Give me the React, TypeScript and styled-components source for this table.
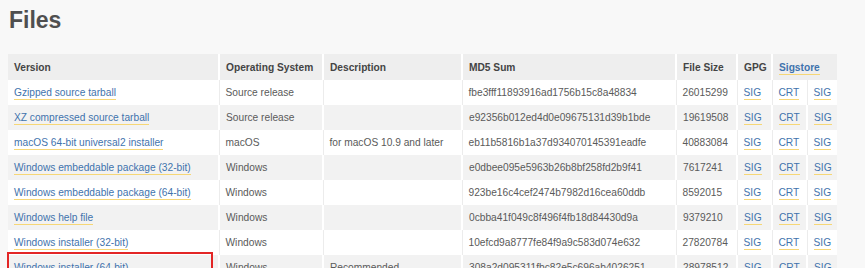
import React from 'react';
import styled, { createGlobalStyle } from 'styled-components';

const GlobalStyle = createGlobalStyle`
  html, body {
    margin: 0;
    padding: 0;
    background: #f8f8f8;
  }
  body {
    font-family: "Liberation Sans", Arial, sans-serif;
    color: #555;
  }
`;

const Page = styled.div`
  padding: 0 0 0 8px;
  width: 857px;
  height: 268px;
  overflow: hidden;
`;

const Heading = styled.h1`
  margin: 0;
  padding: 7px 0 0 1px;
  height: 54px;
  box-sizing: border-box;
  font-size: 23px;
  line-height: 27px;
  font-weight: 700;
  color: #4f4f4f;
`;

const Table = styled.table`
  table-layout: fixed;
  width: 829px;
  border-collapse: collapse;
  font-size: 10.2px;
`;

const HeadCell = styled.th<{ $first?: boolean }>`
  height: 26px;
  padding: 0 6px;
  background: #eeeeee;
  text-align: left;
  font-weight: 700;
  color: #444;
  border-left: ${(p) => (p.$first ? 'none' : '2px solid #fff')};
  white-space: nowrap;
`;

const Row = styled.tr<{ $shade: boolean }>`
  background: ${(p) => (p.$shade ? '#f2f2f2' : '#ffffff')};
`;

const Cell = styled.td<{ $first?: boolean; $shade: boolean }>`
  position: relative;
  height: 25px;
  padding: 0 6px;
  color: #5a5a5a;
  white-space: nowrap;
  overflow: visible;
  border-left: ${(p) =>
    p.$first ? 'none' : p.$shade ? '2px solid #ffffff' : '1px solid #ececec'};
`;

const Link = styled.a`
  color: #3f73ad;
  text-decoration: none;
  border-bottom: 1px solid #f6d776;
  padding-bottom: 1px;
`;

const Highlight = styled.div`
  position: absolute;
  left: -1px;
  top: -3px;
  width: 206px;
  height: 30px;
  border: 2px solid #e32626;
  box-sizing: border-box;
  pointer-events: none;
`;

type FileRow = {
  name: string;
  os: string;
  desc: string;
  md5: string;
  size: string;
  mark?: boolean;
};

const files: FileRow[] = [
  { name: 'Gzipped source tarball', os: 'Source release', desc: '', md5: 'fbe3fff11893916ad1756b15c8a48834', size: '26015299' },
  { name: 'XZ compressed source tarball', os: 'Source release', desc: '', md5: 'e92356b012ed4d0e09675131d39b1bde', size: '19619508' },
  { name: 'macOS 64-bit universal2 installer', os: 'macOS', desc: 'for macOS 10.9 and later', md5: 'eb11b5816b1a37d934070145391eadfe', size: '40883084' },
  { name: 'Windows embeddable package (32-bit)', os: 'Windows', desc: '', md5: 'e0dbee095e5963b26b8bf258fd2b9f41', size: '7617241' },
  { name: 'Windows embeddable package (64-bit)', os: 'Windows', desc: '', md5: '923be16c4cef2474b7982d16cea60ddb', size: '8592015' },
  { name: 'Windows help file', os: 'Windows', desc: '', md5: '0cbba41f049c8f496f4fb18d84430d9a', size: '9379210' },
  { name: 'Windows installer (32-bit)', os: 'Windows', desc: '', md5: '10efcd9a8777fe84f9a9c583d074e632', size: '27820784' },
  { name: 'Windows installer (64-bit)', os: 'Windows', desc: 'Recommended', md5: '308a2d095311fbc82e5c696ab4026251', size: '28978512', mark: true },
];

const widths = [211, 104, 139, 214, 61, 35, 35, 30];

export default function App() {
  return (
    <Page>
      <GlobalStyle />
      <Heading>Files</Heading>
      <Table>
        <colgroup>
          {widths.map((w, i) => (
            <col key={i} style={{ width: w }} />
          ))}
        </colgroup>
        <thead>
          <tr>
            <HeadCell $first>Version</HeadCell>
            <HeadCell>Operating System</HeadCell>
            <HeadCell>Description</HeadCell>
            <HeadCell>MD5 Sum</HeadCell>
            <HeadCell>File Size</HeadCell>
            <HeadCell>GPG</HeadCell>
            <HeadCell colSpan={2}>
              <Link href="#">Sigstore</Link>
            </HeadCell>
          </tr>
        </thead>
        <tbody>
          {files.map((f, i) => {
            const shade = i % 2 === 1;
            return (
              <Row key={f.name} $shade={shade}>
                <Cell $first $shade={shade}>
                  <Link href="#">{f.name}</Link>
                  {f.mark && <Highlight />}
                </Cell>
                <Cell $shade={shade}>{f.os}</Cell>
                <Cell $shade={shade}>{f.desc}</Cell>
                <Cell $shade={shade}>{f.md5}</Cell>
                <Cell $shade={shade}>{f.size}</Cell>
                <Cell $shade={shade}>
                  <Link href="#">SIG</Link>
                </Cell>
                <Cell $shade={shade}>
                  <Link href="#">CRT</Link>
                </Cell>
                <Cell $shade={shade}>
                  <Link href="#">SIG</Link>
                </Cell>
              </Row>
            );
          })}
        </tbody>
      </Table>
    </Page>
  );
}
